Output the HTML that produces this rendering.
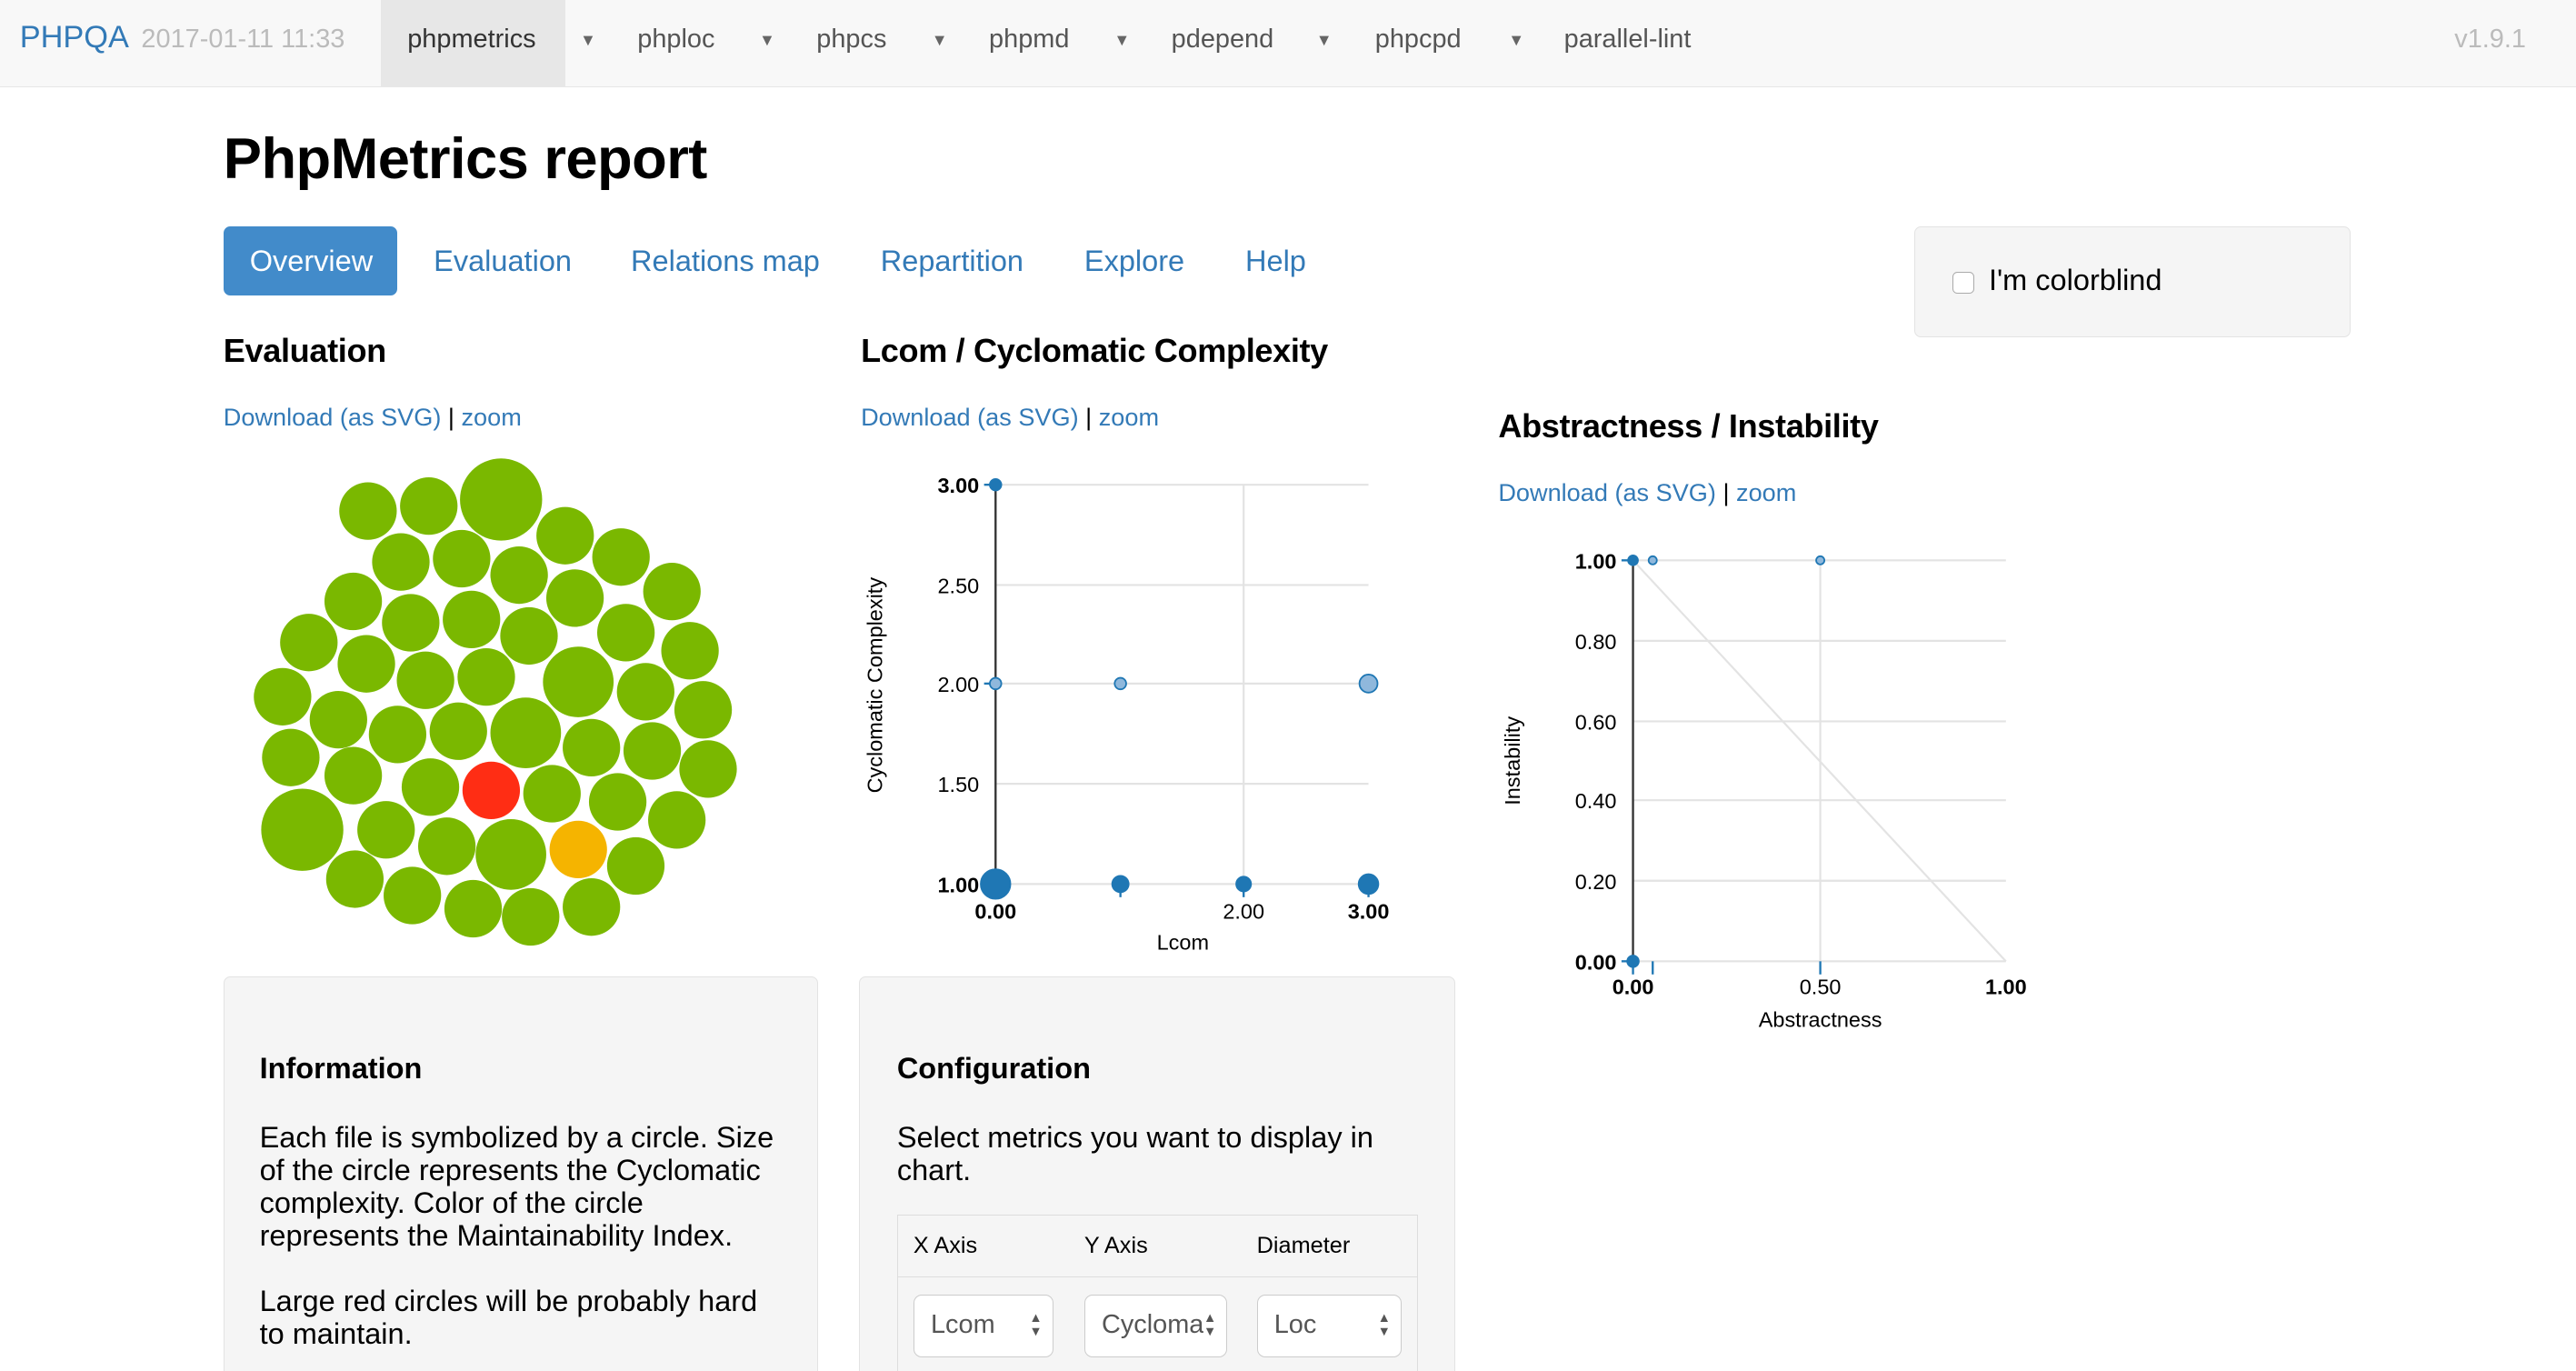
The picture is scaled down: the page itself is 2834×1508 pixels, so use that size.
<!DOCTYPE html>
<html><head><meta charset="utf-8">
<style>
*{box-sizing:border-box;margin:0;padding:0}
html,body{width:2834px;height:1508px;overflow:hidden;background:#fff}
#w{zoom:1.8074;width:1568px;height:834px;position:relative;font-family:"Liberation Sans",Arial,sans-serif;color:#000}
.a{position:absolute;white-space:nowrap}
.nav{position:absolute;left:0;top:0;width:1568px;height:53px;background:#f8f8f8;border-bottom:1px solid #e7e7e7}
.nav span{position:absolute;top:15px;font-size:16px;color:#555}
.car{font-size:10px!important;color:#666!important;top:19px!important}
.link{color:#337ab7}
h3{font-weight:bold;font-size:20px;letter-spacing:-0.2px}
.panel{position:absolute;background:#f5f5f5;border:1px solid #e3e3e3;border-radius:4px}
.sel{position:absolute;top:788px;height:38px;background:#fff;border:1px solid #ccc;border-radius:5px;font-size:16px;color:#555;padding:9px 10px}
.sel i{position:absolute;right:6px;top:10px;font-size:8px;line-height:8px;font-style:normal;color:#555}
</style></head><body><div id="w">
<div class="nav">
 <span style="left:12px;top:12px;font-size:19px;color:#337ab7">PHPQA</span>
 <span style="left:86px;font-size:16px;color:#bbb">2017-01-11 11:33</span>
 <div style="position:absolute;left:232px;top:0;width:112px;height:53px;background:#e7e7e7"></div>
 <span style="left:248px;color:#333">phpmetrics</span><span class="car" style="left:353px">▼</span>
 <span style="left:388px">phploc</span><span class="car" style="left:462px">▼</span>
 <span style="left:497px">phpcs</span><span class="car" style="left:567px">▼</span>
 <span style="left:602px">phpmd</span><span class="car" style="left:678px">▼</span>
 <span style="left:713px">pdepend</span><span class="car" style="left:801px">▼</span>
 <span style="left:837px">phpcpd</span><span class="car" style="left:918px">▼</span>
 <span style="left:952px">parallel-lint</span>
 <span style="left:1494px;color:#bbb">v1.9.1</span>
</div>
<div class="a" style="left:136px;top:77px;font-size:35px;font-weight:bold;letter-spacing:-0.3px">PhpMetrics report</div>
<div class="a" style="left:136px;top:138px;width:106px;height:42px;background:#428bca;border-radius:4px;color:#fff;font-size:18px;padding:11px 0 0 16px">Overview</div>
<div class="a link" style="left:264px;top:149px;font-size:18px">Evaluation</div>
<div class="a link" style="left:384px;top:149px;font-size:18px">Relations map</div>
<div class="a link" style="left:536px;top:149px;font-size:18px">Repartition</div>
<div class="a link" style="left:660px;top:149px;font-size:18px">Explore</div>
<div class="a link" style="left:758px;top:149px;font-size:18px">Help</div>
<div class="panel" style="left:1165px;top:138px;width:266px;height:67px">
 <div class="a" style="left:23px;top:27px;width:13px;height:13px;border:1px solid #aaa;border-radius:3px;background:#fff"></div>
 <div class="a" style="left:45px;top:22px;font-size:18px">I'm colorblind</div>
</div>
<h3 class="a" style="left:136px;top:202px">Evaluation</h3>
<div class="a" style="left:136px;top:245px;font-size:15px"><span class="link">Download (as SVG)</span> | <span class="link">zoom</span></div>
<h3 class="a" style="left:524px;top:202px">Lcom / Cyclomatic Complexity</h3>
<div class="a" style="left:524px;top:245px;font-size:15px"><span class="link">Download (as SVG)</span> | <span class="link">zoom</span></div>
<h3 class="a" style="left:912px;top:248px">Abstractness / Instability</h3>
<div class="a" style="left:912px;top:291px;font-size:15px"><span class="link">Download (as SVG)</span> | <span class="link">zoom</span></div>

<svg class="a" style="left:0;top:0" width="1568" height="834" font-family="Liberation Sans,Arial,sans-serif">
<g fill="#7ab800">
<circle cx="224" cy="311" r="17.5"/><circle cx="261" cy="308" r="17.5"/><circle cx="305" cy="304" r="25"/><circle cx="344" cy="326" r="17.5"/><circle cx="378" cy="339" r="17.5"/>
<circle cx="244" cy="342" r="17.5"/><circle cx="281" cy="340" r="17.5"/><circle cx="316" cy="350" r="17.5"/><circle cx="350" cy="364" r="17.5"/><circle cx="409" cy="360" r="17.5"/>
<circle cx="215" cy="366" r="17.5"/><circle cx="250" cy="379" r="17.5"/><circle cx="287" cy="377" r="17.5"/><circle cx="322" cy="387" r="17.5"/><circle cx="381" cy="385" r="17.5"/><circle cx="420" cy="396" r="17.5"/>
<circle cx="188" cy="391" r="17.5"/><circle cx="223" cy="404" r="17.5"/><circle cx="259" cy="414" r="17.5"/><circle cx="296" cy="412" r="17.5"/><circle cx="352" cy="415" r="21.5"/><circle cx="393" cy="421" r="17.5"/><circle cx="428" cy="432" r="17.5"/>
<circle cx="172" cy="424" r="17.5"/><circle cx="206" cy="438" r="17.5"/><circle cx="242" cy="447" r="17.5"/><circle cx="279" cy="445" r="17.5"/><circle cx="320" cy="446" r="21.5"/><circle cx="360" cy="455" r="17.5"/><circle cx="397" cy="457" r="17.5"/><circle cx="431" cy="468" r="17.5"/>
<circle cx="177" cy="461" r="17.5"/><circle cx="215" cy="472" r="17.5"/><circle cx="262" cy="479" r="17.5"/><circle cx="336" cy="483" r="17.5"/><circle cx="376" cy="488" r="17.5"/><circle cx="412" cy="499" r="17.5"/>
<circle cx="184" cy="505" r="25"/><circle cx="235" cy="505" r="17.5"/><circle cx="272" cy="515" r="17.5"/><circle cx="311" cy="520" r="21.5"/><circle cx="387" cy="527" r="17.5"/>
<circle cx="216" cy="535" r="17.5"/><circle cx="251" cy="545" r="17.5"/><circle cx="288" cy="553" r="17.5"/><circle cx="323" cy="558" r="17.5"/><circle cx="360" cy="552" r="17.5"/>
</g>
<circle cx="299" cy="481" r="17.5" fill="#ff2d14"/><circle cx="352" cy="517" r="17.5" fill="#f5b400"/>

<g stroke="#e3e3e3" stroke-width="1.2">
<line x1="606" y1="295" x2="833" y2="295"/><line x1="606" y1="356" x2="833" y2="356"/><line x1="606" y1="416" x2="833" y2="416"/><line x1="606" y1="477" x2="833" y2="477"/><line x1="606" y1="538" x2="833" y2="538"/><line x1="757" y1="295" x2="757" y2="538"/>
<line x1="994" y1="341" x2="1221" y2="341"/><line x1="994" y1="390" x2="1221" y2="390"/><line x1="994" y1="439" x2="1221" y2="439"/><line x1="994" y1="487" x2="1221" y2="487"/><line x1="994" y1="536" x2="1221" y2="536"/><line x1="994" y1="585" x2="1221" y2="585"/><line x1="1108" y1="341" x2="1108" y2="585"/><line x1="994" y1="341" x2="1221" y2="585"/>
</g>
<g stroke="#333" stroke-width="1.3"><line x1="606" y1="295" x2="606" y2="538"/><line x1="994" y1="341" x2="994" y2="585"/></g>
<g stroke="#1f77b4" stroke-width="1.3"><line x1="599" y1="295" x2="606" y2="295"/><line x1="599" y1="416" x2="606" y2="416"/><line x1="682" y1="538" x2="682" y2="546"/><line x1="757" y1="538" x2="757" y2="546"/><line x1="833" y1="538" x2="833" y2="546"/>
<line x1="987" y1="341" x2="994" y2="341"/><line x1="987" y1="585" x2="994" y2="585"/><line x1="994" y1="585" x2="994" y2="593"/><line x1="1006" y1="585" x2="1006" y2="593"/><line x1="1108" y1="585" x2="1108" y2="593"/></g>
<g fill="#1f77b4" stroke="#1f77b4">
<circle cx="606" cy="295" r="3.5"/><circle cx="606" cy="538" r="9"/><circle cx="682" cy="538" r="5"/><circle cx="757" cy="538" r="4.5"/><circle cx="833" cy="538" r="6"/>
<circle cx="994" cy="341" r="3"/><circle cx="994" cy="585" r="3.5"/></g>
<g fill="#8fb8dc" stroke="#1f77b4" stroke-width="1"><circle cx="606" cy="416" r="3.5"/><circle cx="682" cy="416" r="3.5"/><circle cx="833" cy="416" r="5.5"/><circle cx="1006" cy="341" r="2.5"/><circle cx="1108" cy="341" r="2.5"/></g>
<g font-size="13" text-anchor="end">
<text x="596" y="300" font-weight="bold">3.00</text><text x="596" y="361">2.50</text><text x="596" y="421">2.00</text><text x="596" y="482">1.50</text><text x="596" y="543" font-weight="bold">1.00</text>
<text x="984" y="346" font-weight="bold">1.00</text><text x="984" y="395">0.80</text><text x="984" y="444">0.60</text><text x="984" y="492">0.40</text><text x="984" y="541">0.20</text><text x="984" y="590" font-weight="bold">0.00</text>
</g>
<g font-size="13" text-anchor="middle">
<text x="606" y="559" font-weight="bold">0.00</text><text x="757" y="559">2.00</text><text x="833" y="559" font-weight="bold">3.00</text><text x="720" y="578">Lcom</text>
<text x="994" y="605" font-weight="bold">0.00</text><text x="1108" y="605">0.50</text><text x="1221" y="605" font-weight="bold">1.00</text><text x="1108" y="625">Abstractness</text>
<text transform="translate(537,417) rotate(-90)">Cyclomatic Complexity</text><text transform="translate(925,463) rotate(-90)">Instability</text>
</g>
</svg>

<div class="panel" style="left:136px;top:594px;width:362px;height:260px"></div>
<div class="a" style="left:158px;top:640px;font-size:18px;font-weight:bold">Information</div>
<div class="a" style="left:158px;top:682px;font-size:18px;line-height:20px">Each file is symbolized by a circle. Size<br>of the circle represents the Cyclomatic<br>complexity. Color of the circle<br>represents the Maintainability Index.<br><br style="line-height:18px">Large red circles will be probably hard<br>to maintain.</div>
<div class="panel" style="left:523px;top:594px;width:363px;height:260px"></div>
<div class="a" style="left:546px;top:640px;font-size:18px;font-weight:bold">Configuration</div>
<div class="a" style="left:546px;top:682px;font-size:18px;line-height:20px">Select metrics you want to display in<br>chart.</div>
<div class="a" style="left:546px;top:739px;width:317px;height:110px;border:1px solid #ddd"></div>
<div class="a" style="left:546px;top:777px;width:317px;border-top:1px solid #ddd"></div>
<div class="a" style="left:556px;top:750px;font-size:14px">X Axis</div>
<div class="a" style="left:660px;top:750px;font-size:14px">Y Axis</div>
<div class="a" style="left:765px;top:750px;font-size:14px">Diameter</div>
<div class="sel" style="left:556px;width:85px">Lcom<i>▲<br>▼</i></div>
<div class="sel" style="left:660px;width:87px;overflow:hidden">Cycloma<i style="background:#fff">▲<br>▼</i></div>
<div class="sel" style="left:765px;width:88px">Loc<i>▲<br>▼</i></div>
</div></body></html>
